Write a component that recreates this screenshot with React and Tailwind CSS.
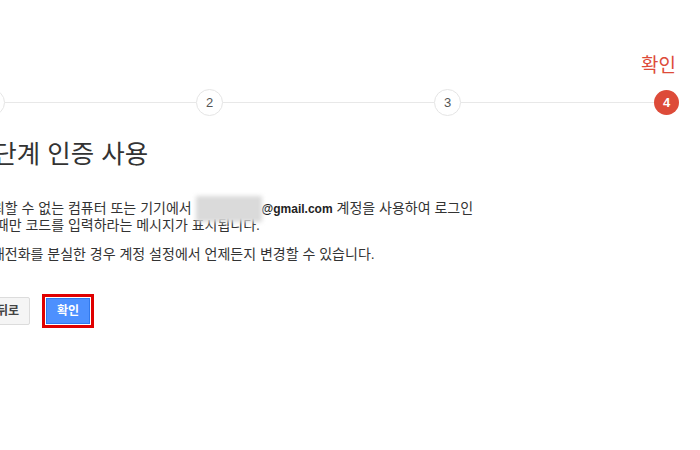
import React from "react";

const font = { fontFamily: '"Liberation Sans", "Noto Sans CJK KR", sans-serif' };

// one step circle of the progress bar
const Step = ({ n, active }) =>
  active ? (
    <div className="w-[25px] h-[25px] rounded-full bg-[#dd4b39] text-white text-[13px] font-bold flex items-center justify-center shrink-0">
      {n}
    </div>
  ) : (
    <div className="w-[27px] h-[27px] rounded-full bg-white border border-[#e5e5e5] text-[#555] text-[13px] flex items-center justify-center shrink-0">
      {n}
    </div>
  );

const Line = ({ w }) => <div className={`h-px bg-[#e8e8e8] shrink-0 ${w}`} />;

export default function App() {
  return (
    <div className="w-[700px] h-[450px] bg-white overflow-hidden text-[#333]" style={font}>
      {/* stepper */}
      <div className="ml-[-22px] w-[701px] pt-[55px]">
        <div className="flex justify-end pr-[3px]">
          <span className="text-[19px] leading-[22px] text-[#dd4b39]">확인</span>
        </div>
        <div className="flex items-center mt-[12px]">
          <Step n={1} />
          <Line w="w-[191px]" />
          <Step n={2} />
          <Line w="w-[211px]" />
          <Step n={3} />
          <Line w="w-[193px]" />
          <Step n={4} active />
        </div>
      </div>

      {/* content */}
      <div className="ml-[-21px]">
        <h1 className="text-[25.5px] leading-[32px] font-normal text-[#333] mt-[22px]">2단계 인증 사용</h1>

        <p className="text-[14px] leading-[16px] mt-[30px]">
          신뢰할 수 없는 컴퓨터 또는 기기에서{" "}
          <span className="relative inline-block w-[66px] align-baseline">
            <span className="invisible">xxxxxxxx</span>
            <span className="absolute left-0 right-0 top-[-4px] h-[26px] bg-[#dadada] blur-[2px]" />
          </span>
          <b className="text-[12px] text-[#222]">@gmail.com</b> 계정을 사용하여 로그인
          <br />할 때만 코드를 입력하라는 메시지가 표시됩니다.
        </p>
        <p className="text-[14px] leading-[16px] mt-[13px]">
          휴대전화를 분실한 경우 계정 설정에서 언제든지 변경할 수 있습니다.
        </p>

        <div className="flex items-center mt-[32px]">
          <button className="h-[28px] pl-[17px] pr-[10px] bg-[#f5f5f5] border border-[#dcdcdc] rounded-[2px] text-[12px] font-bold text-[#444]">
            뒤로
          </button>
          <div className="ml-[12px] border-[3px] border-[#e00000] p-px bg-white">
            <button className="h-[26px] w-[44px] bg-[#4d90fe] border border-[#3079ed] text-[12px] font-bold text-white">
              확인
            </button>
          </div>
        </div>
      </div>
    </div>
  );
}
